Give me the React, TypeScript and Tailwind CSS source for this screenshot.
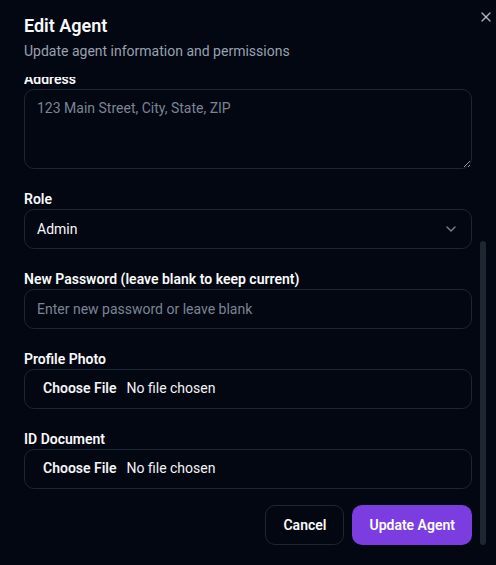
import { useEffect, useRef } from 'react';
import { X, ChevronDown } from 'lucide-react';

const inputCls =
  'w-full h-10 rounded-[10px] border border-[#1f2633] bg-transparent px-3 py-2 text-sm text-gray-100 placeholder:text-[#7b8494] outline-none';

const fileCls = `${inputCls} file:px-1.5 file:mr-1 file:border-0 file:bg-transparent file:text-sm file:font-semibold file:text-gray-100`;

function Field({ label, children }: { label: string; children: React.ReactNode }) {
  return (
    <div className="flex flex-col">
      <label className="text-sm leading-5 font-semibold text-gray-50">{label}</label>
      {children}
    </div>
  );
}

export default function App() {
  const scrollRef = useRef<HTMLDivElement>(null);

  // dialog is shown scrolled to the bottom
  useEffect(() => {
    if (scrollRef.current) {
      scrollRef.current.scrollTop = scrollRef.current.scrollHeight;
    }
  }, []);

  return (
    <div
      className="relative w-[496px] h-[565px] bg-[#030712] flex flex-col px-6 pt-[17px] pb-5 overflow-hidden"
      style={{ fontFamily: 'Roboto, "Noto Sans", sans-serif' }}
    >
      {/* Close */}
      <button className="absolute right-[2px] top-[9px] w-4 h-4 text-gray-300/80" aria-label="Close">
        <X className="w-4 h-4" />
      </button>

      {/* Header */}
      <div className="flex flex-col gap-1.5">
        <h2 className="text-lg font-semibold leading-none text-gray-50">Edit Agent</h2>
        <p className="text-sm leading-5 text-gray-400">Update agent information and permissions</p>
      </div>

      {/* Scrollable form */}
      <div
        ref={scrollRef}
        className="mt-4 flex-1 min-h-0 overflow-y-auto [scrollbar-width:none] [&::-webkit-scrollbar]:hidden"
      >
        <div className="flex flex-col gap-5 pt-1">
          <Field label="Full Name">
            <input className={inputCls} defaultValue="John Smith" />
          </Field>
          <Field label="Email">
            <input className={inputCls} defaultValue="john@example.com" />
          </Field>
          <Field label="Phone Number">
            <input className={inputCls} defaultValue="+1 555 123 4567" />
          </Field>
          <Field label="Address">
            <textarea
              className="w-full h-20 rounded-[10px] border border-[#1f2633] bg-transparent px-3 py-2 text-sm text-gray-100 placeholder:text-[#7b8494] outline-none"
              placeholder="123 Main Street, City, State, ZIP"
            />
          </Field>
          <Field label="Role">
            <div className="w-full h-10 rounded-[10px] border border-[#1f2633] px-3 flex items-center justify-between text-sm text-gray-50">
              <span>Admin</span>
              <ChevronDown className="w-4 h-4 opacity-50" />
            </div>
          </Field>
          <Field label="New Password (leave blank to keep current)">
            <input className={inputCls} type="password" placeholder="Enter new password or leave blank" />
          </Field>
          <Field label="Profile Photo">
            <input type="file" className={fileCls} />
          </Field>
          <Field label="ID Document">
            <input type="file" className={fileCls} />
          </Field>
        </div>

        <div className="flex justify-end gap-2 mt-4">
          <button className="h-10 px-[17px] rounded-[10px] border border-[#1f2633] text-sm font-semibold text-gray-50">
            Cancel
          </button>
          <button className="h-10 px-[17px] rounded-[10px] bg-[#7b3de0] text-sm font-semibold text-white">
            Update Agent
          </button>
        </div>
      </div>

      {/* Scrollbar thumb (scrolled to bottom) */}
      <div className="absolute right-[10px] top-[241px] w-1.5 h-[304px] rounded-full bg-[#1e2632]" />
    </div>
  );
}
